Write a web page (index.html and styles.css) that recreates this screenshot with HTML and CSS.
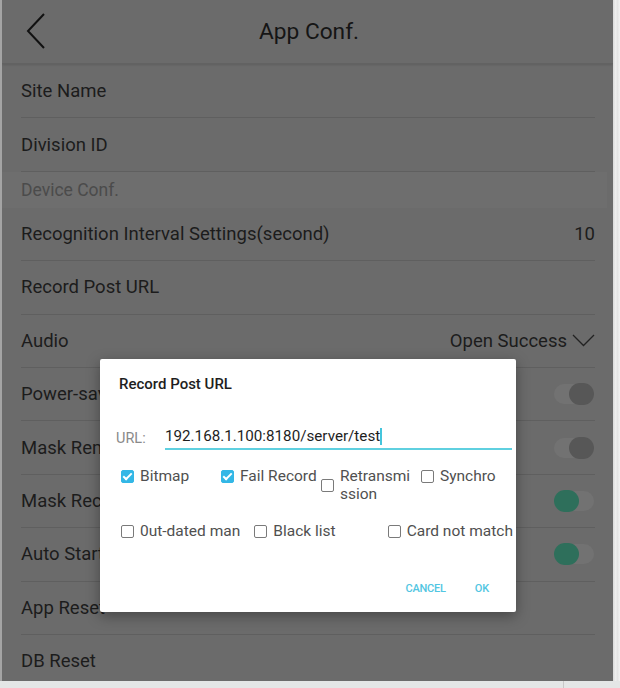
FILE: index.html
```html
<!DOCTYPE html>
<html lang="en">
<head>
    <meta charset="UTF-8">
    <meta name="viewport" content="width=device-width, initial-scale=1.0">
    <title>App Conf.</title>
    <link rel="stylesheet" href="styles.css">
</head>
<body>
    <div class="marco">
        <div class="borde_izq"></div>
        <div class="pantalla">
            <div class="cabecera">
                <svg class="atras" width="24" height="40" viewBox="0 0 24 40">
                    <path d="M20 3 L4 20 L20 37" fill="none" stroke="#111" stroke-width="2"/>
                </svg>
                <h1>App Conf.</h1>
            </div>

            <div class="lista">
                <div class="fila">Site Name</div>
                <div class="fila">Division ID</div>
                <div class="seccion">Device Conf.</div>
                <div class="fila"><span>Recognition Interval Settings(second)</span><span>10</span></div>
                <div class="fila">Record Post URL</div>
                <div class="fila">
                    <span>Audio</span>
                    <span class="valor">Open Success
                        <svg width="23" height="13" viewBox="0 0 23 13"><path d="M1 1 L11.5 11.5 L22 1" fill="none" stroke="#222" stroke-width="1.3"/></svg>
                    </span>
                </div>
                <div class="fila"><span>Power-save</span><span class="interruptor"></span></div>
                <div class="fila"><span>Mask Reminder</span><span class="interruptor"></span></div>
                <div class="fila"><span>Mask Recognition</span><span class="interruptor activo"></span></div>
                <div class="fila"><span>Auto Start</span><span class="interruptor activo"></span></div>
                <div class="fila">App Reset</div>
                <div class="fila">DB Reset</div>
            </div>

            <div class="dialogo">
                <h2>Record Post URL</h2>
                <div class="campo">
                    <label>URL:</label>
                    <div class="entrada">192.168.1.100:8180/server/test<span class="cursor"></span></div>
                </div>
                <div class="opciones cuatro">
                    <div class="opcion"><span class="caja marcada"></span><span>Bitmap</span></div>
                    <div class="opcion"><span class="caja marcada"></span><span>Fail Record</span></div>
                    <div class="opcion"><span class="caja"></span><span class="partido">Retransmission</span></div>
                    <div class="opcion"><span class="caja"></span><span>Synchro</span></div>
                </div>
                <div class="opciones tres">
                    <div class="opcion"><span class="caja"></span><span>0ut-dated man</span></div>
                    <div class="opcion"><span class="caja"></span><span>Black list</span></div>
                    <div class="opcion"><span class="caja"></span><span>Card not match</span></div>
                </div>
                <div class="botones">
                    <span>CANCEL</span>
                    <span>OK</span>
                </div>
            </div>
        </div>
        <div class="borde_der"></div>
    </div>
    <div class="barra_inferior"><div class="tramo"></div></div>
</body>
</html>
```

FILE: styles.css
```css
html{
    font-family: Roboto, 'Liberation Sans', sans-serif;
}

body{
    margin: 0;
    width: 620px;
    height: 688px;
    overflow: hidden;
    background: #e4e6e6;
}

.marco{
    display: flex;
    height: 681px;
}

.borde_izq{
    width: 2px;
    background: #a4a4a4;
}

.borde_der{
    width: 7px;
    background: linear-gradient(to right, #d8d8d8, #f0f0f0 40%, #e2e2e2 60%, #f2f2f2);
}

.pantalla{
    position: relative;
    width: 611px;
    background: #6b6b6b;
    overflow: hidden;
}

.cabecera{
    height: 63px;
    display: flex;
    align-items: center;
    justify-content: center;
    position: relative;
    border-bottom: 1px solid #626262;
    box-shadow: 0 1px 2px rgba(0, 0, 0, 0.12);
}

.atras{
    position: absolute;
    left: 22px;
    top: 11px;
}

h1{
    margin: 0;
    font-size: 22.7px;
    font-weight: 400;
    color: #151515;
    padding-left: 3px;
}

.lista{
    padding-top: 1px;
}

.fila{
    height: 52.4px;
    margin: 0 18px 0 19px;
    border-bottom: 1px solid #5f5f5f;
    display: flex;
    align-items: center;
    justify-content: space-between;
    font-size: 18.5px;
    color: #1c1c1c;
}

.seccion{
    height: 36px;
    padding-left: 19px;
    display: flex;
    align-items: center;
    background: #6e6e6e;
    font-size: 17.5px;
    color: #4b4b4b;
    margin-right: 6px;
}

.valor{
    display: flex;
    align-items: center;
    gap: 5px;
}

.interruptor{
    width: 40px;
    height: 20px;
    border-radius: 10px;
    background: #727272;
    position: relative;
    margin-right: 1px;
}

.interruptor::after{
    content: "";
    position: absolute;
    right: 0;
    top: -1px;
    width: 25px;
    height: 22px;
    border-radius: 11px;
    background: #575757;
}

.interruptor.activo::after{
    left: 0;
    right: auto;
    background: #2e6f5b;
}

.dialogo{
    position: absolute;
    left: 98px;
    top: 359px;
    width: 416px;
    height: 253px;
    background: #fff;
    border-radius: 2px;
    box-shadow: 0 4px 14px rgba(0, 0, 0, 0.35);
    box-sizing: border-box;
    padding: 16px 0 0 19px;
}

h2{
    margin: 0;
    font-size: 15px;
    font-weight: 500;
    color: #1e1e1e;
    line-height: 18px;
}

.campo{
    display: flex;
    align-items: flex-end;
    margin-top: 34px;
    margin-left: -3px;
}

.campo label{
    font-size: 14.5px;
    color: #8a8a8a;
    width: 49px;
    padding-bottom: 3px;
}

.entrada{
    flex: 1;
    margin-right: 4px;
    font-size: 15.2px;
    color: #1e1e1e;
    padding-bottom: 3px;
    border-bottom: 2px solid #5fd0e0;
    display: flex;
    align-items: center;
}

.cursor{
    display: inline-block;
    width: 2px;
    height: 17px;
    background: #44c5dc;
}

.opciones{
    display: grid;
    align-items: start;
    width: 400px;
    margin-left: 2px;
    font-size: 15.5px;
    color: #505050;
    line-height: 18px;
}

.cuatro{
    grid-template-columns: repeat(4, 100px);
    margin-top: 17px;
}

.tres{
    grid-template-columns: repeat(3, 1fr);
    margin-top: 19px;
}

.opcion{
    display: flex;
    align-items: center;
    gap: 6px;
}

.caja{
    flex: none;
    width: 11px;
    height: 11px;
    border: 1.5px solid #7a7a7a;
    border-radius: 2px;
    position: relative;
}

.caja.marcada{
    background: #33b7e6;
    border-color: #33b7e6;
}

.caja.marcada::after{
    content: "";
    position: absolute;
    left: 3px;
    top: 0;
    width: 3px;
    height: 7px;
    border: solid #fff;
    border-width: 0 2px 2px 0;
    transform: rotate(45deg);
}

.partido{
    width: 76px;
    word-break: break-all;
}

.botones{
    display: flex;
    justify-content: flex-end;
    gap: 29px;
    margin-top: 42px;
    margin-right: 27px;
    font-size: 11px;
    font-weight: 500;
    color: #52c6e2;
    letter-spacing: -0.2px;
}

.barra_inferior{
    height: 7px;
    background: #e4e6e6;
    display: flex;
    justify-content: flex-end;
}

.tramo{
    width: 56px;
    border-left: 1px solid #c8c8c8;
}
```
